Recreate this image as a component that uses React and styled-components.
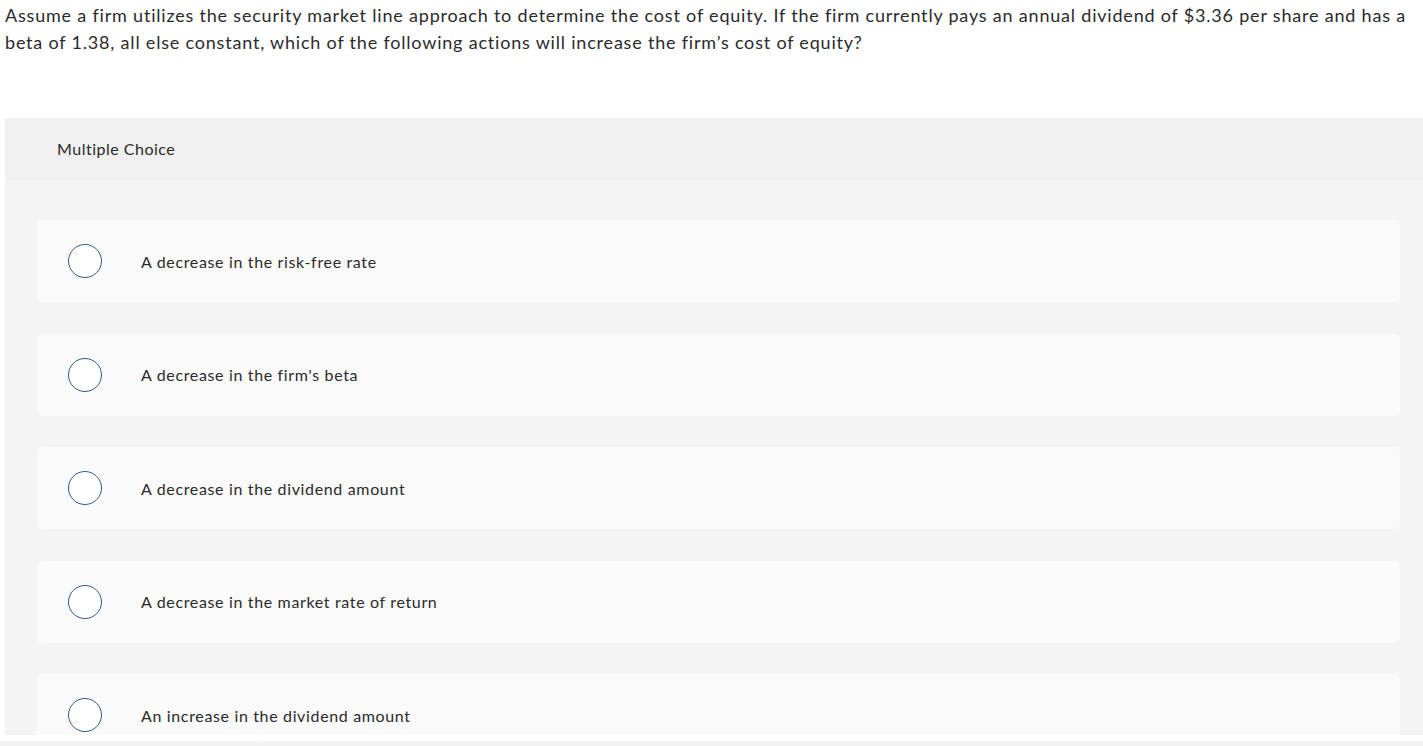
import React from 'react';
import styled, { createGlobalStyle } from 'styled-components';

const GlobalStyle = createGlobalStyle`
    html, body {
        margin: 0;
        padding: 0;
        background: #fff;
        overflow: hidden;
    }
    body {
        font-family: Lato, "Open Sans", sans-serif;
        font-variant-ligatures: none;
        color: #2b2b2b;
    }
`

const Page = styled.div`
    width: 1423px;
    height: 746px;
    overflow: hidden;
    display: flex;
    flex-direction: column;
`
const Frame = styled.div`
    height: 735px;
    overflow: hidden;
    flex-shrink: 0;
`
const BottomStrip = styled.div`
    margin-top: 6px;
    height: 5px;
    background-color: #f2f2f2;
`
const Question = styled.p`
    margin: 0;
    padding: 2px 6px 0 5px;
    font-size: 18px;
    line-height: 27px;
    letter-spacing: 0.8px;
    color: #2b2b2b;
`
const Panel = styled.div`
    margin: 62px 0 0 5px;
    background-color: #f4f4f4;
`
const PanelHeader = styled.div`
    height: 62px;
    display: flex;
    align-items: center;
    padding: 0 0 2px 52px;
    box-sizing: border-box;
    background-color: #f0f0f0;
    font-size: 16px;
    letter-spacing: 0.5px;
    color: #2b2b2b;
`
const List = styled.div`
    display: flex;
    flex-direction: column;
    gap: 31.5px;
    padding: 40px 23px 40px 32px;
`
const Option = styled.label`
    height: 82px;
    display: flex;
    align-items: center;
    background-color: #fafafa;
    border-radius: 5px;
    cursor: pointer;
`
const Radio = styled.span`
    width: 32px;
    height: 32px;
    margin-left: 31px;
    border: 1.5px solid #2d5b8a;
    border-radius: 50%;
    background-color: #fff;
    flex-shrink: 0;
`
const OptionText = styled.span`
    margin-left: 39px;
    font-size: 16px;
    letter-spacing: 0.65px;
    color: #2b2b2b;
`

const options = [
    'A decrease in the risk-free rate',
    "A decrease in the firm's beta",
    'A decrease in the dividend amount',
    'A decrease in the market rate of return',
    'An increase in the dividend amount',
];

const App = () => {
    return (
        <Page>
            <GlobalStyle />
            <Frame>
                <Question>
                    Assume a firm utilizes the security market line approach to determine the cost of equity. If the firm currently pays an annual dividend of $3.36 per share and has a beta of 1.38, all else constant, which of the following actions will increase the firm’s cost of equity?
                </Question>
                <Panel>
                    <PanelHeader>Multiple Choice</PanelHeader>
                    <List>
                        {options.map((o) => (
                            <Option key={o}>
                                <Radio />
                                <OptionText>{o}</OptionText>
                            </Option>
                        ))}
                    </List>
                </Panel>
            </Frame>
            <BottomStrip />
        </Page>
    );
}

export default App;
